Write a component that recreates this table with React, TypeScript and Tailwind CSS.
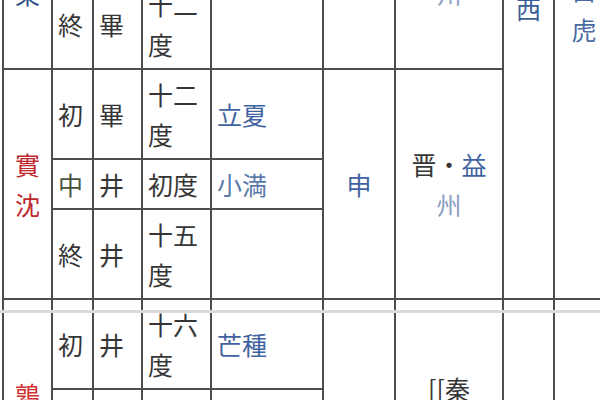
const cell = "border-2 border-[#4d4d4d] px-[5px] py-[4px] align-middle";
const left = `${cell} text-left`;
const mid = `${cell} text-center`;
const link = "text-[#3f63a0]";

export default function App() {
  return (
    <div
      className="relative h-[400px] w-[600px] overflow-hidden bg-white text-[25px] leading-[40px] text-[#363636]"
      style={{ fontFamily: '"Noto Sans CJK JP", "Noto Sans CJK SC", sans-serif' }}
    >
      <table className="-mt-[22px] ml-[2px] w-[611px] table-fixed border-collapse">
        <colgroup>
          <col className="w-[49px]" />
          <col className="w-[41px]" />
          <col className="w-[49px]" />
          <col className="w-[69px]" />
          <col className="w-[112px]" />
          <col className="w-[72px]" />
          <col className="w-[108px]" />
          <col className="w-[51px]" />
          <col className="w-[60px]" />
        </colgroup>
        <tbody>
          {/* 大梁 (tail end) */}
          <tr>
            <td className={`${cell} text-center !align-top text-[#2f4f86]`}>
              <div className="-mt-[11px]">梁</div>
            </td>
            <td className={left}>終</td>
            <td className={left}>畢</td>
            <td className={left}>十二度</td>
            <td className={left}></td>
            <td className={mid}></td>
            <td className={`${cell} text-center !align-top text-[#8c9dc2]`}>
              <div className="-mt-[11px]">州</div>
            </td>
            <td rowSpan={4} className={`${cell} text-center !align-top text-[#3a5d98]`}>
              <div className="pt-[4px]">西</div>
            </td>
            <td rowSpan={4} className={`${cell} text-center !align-top text-[#4a6aa3]`}>
              <div className="-mt-[15px]">
                白<br />虎
              </div>
            </td>
          </tr>

          {/* 實沈 */}
          <tr>
            <td rowSpan={3} className={`${mid} text-[#c0282f]`}>實沈</td>
            <td className={left}>初</td>
            <td className={left}>畢</td>
            <td className={left}>十二度</td>
            <td className={`${left} ${link}`}>立夏</td>
            <td rowSpan={3} className={`${mid} ${link}`}>申</td>
            <td rowSpan={3} className={mid}>
              晋・<span className="text-[#3f63a0]">益</span>
              <span className="text-[#8c9dc2]">州</span>
            </td>
          </tr>
          <tr>
            <td className={`${left} text-[#4a5540]`}>中</td>
            <td className={left}>井</td>
            <td className={left}>初度</td>
            <td className={`${left} text-[#5b7aab]`}>小満</td>
          </tr>
          <tr>
            <td className={left}>終</td>
            <td className={left}>井</td>
            <td className={left}>十五度</td>
            <td className={left}></td>
          </tr>

          {/* 鶉首 */}
          <tr>
            <td rowSpan={3} className={`${mid} text-[#d0302f]`}>鶉首</td>
            <td className={left}>初</td>
            <td className={left}>井</td>
            <td className={left}>十六度</td>
            <td className={`${left} ${link}`}>芒種</td>
            <td rowSpan={3} className={`${mid} ${link}`}>未</td>
            <td rowSpan={3} className={mid}>
              <div className="pb-[12px]">
                [[秦
                <br />
                ・雍州]]
              </div>
            </td>
            <td rowSpan={3} className={mid}></td>
            <td rowSpan={3} className={mid}></td>
          </tr>
          <tr>
            <td className={left}>中</td>
            <td className={left}>井</td>
            <td className={left}>三十一度</td>
            <td className={`${left} ${link}`}>夏至</td>
          </tr>
          <tr>
            <td className={left}>終</td>
            <td className={left}>柳</td>
            <td className={left}>八度</td>
            <td className={left}></td>
          </tr>
        </tbody>
      </table>

      <div className="absolute left-0 right-0 top-[310px] h-[3px] bg-[#dadada]" />
    </div>
  );
}
